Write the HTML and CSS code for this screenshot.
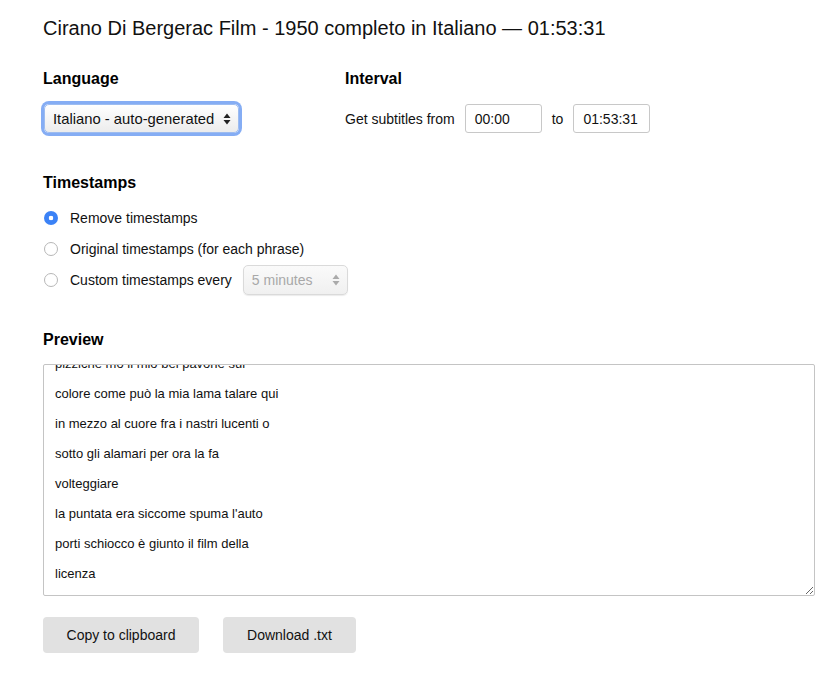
FILE: index.html
```html
<!DOCTYPE html>
<html>
<head>
<meta charset="utf-8">
<link rel="stylesheet" href="styles.css">
</head>
<body>
<div class="page">
  <h1 class="title">Cirano Di Bergerac Film - 1950 completo in Italiano — 01:53:31</h1>

  <div class="row">
    <section class="col col-lang">
      <h2 class="heading">Language</h2>
      <div class="select select-focus">
        <span>Italiano - auto-generated</span>
        <svg class="arrows" width="8" height="12" viewBox="0 0 8 12"><path d="M4 0.5 L7.5 5 H0.5 Z M4 11.5 L7.5 7 H0.5 Z" fill="#222"/></svg>
      </div>
    </section>
    <section class="col">
      <h2 class="heading">Interval</h2>
      <div class="interval">
        <span>Get subtitles from</span>
        <div class="field">00:00</div>
        <span>to</span>
        <div class="field">01:53:31</div>
      </div>
    </section>
  </div>

  <section class="block block-ts">
    <h2 class="heading">Timestamps</h2>
    <div class="radios">
      <label class="radio-row"><span class="radio checked"></span>Remove timestamps</label>
      <label class="radio-row"><span class="radio"></span>Original timestamps (for each phrase)</label>
      <label class="radio-row"><span class="radio"></span>Custom timestamps every
        <div class="select select-disabled">
          <span>5 minutes</span>
          <svg class="arrows" width="8" height="12" viewBox="0 0 8 12"><path d="M4 0.5 L7.5 5 H0.5 Z M4 11.5 L7.5 7 H0.5 Z" fill="#aaa"/></svg>
        </div>
      </label>
    </div>
  </section>

  <section class="block block-preview">
    <h2 class="heading">Preview</h2>
    <div class="preview">
      <div class="preview-inner">
        <p>pizziche mo il mio bel pavone sul</p>
        <p>colore come può la mia lama talare qui</p>
        <p>in mezzo al cuore fra i nastri lucenti o</p>
        <p>sotto gli alamari per ora la fa</p>
        <p>volteggiare</p>
        <p>la puntata era siccome spuma l'auto</p>
        <p>porti schiocco è giunto il film della</p>
        <p>licenza</p>
      </div>
    </div>
  </section>

  <div class="buttons">
    <button class="btn btn-copy">Copy to clipboard</button>
    <button class="btn btn-download">Download .txt</button>
  </div>
</div>
</body>
</html>
```

FILE: styles.css
```css
* { box-sizing: border-box; }
html, body { margin: 0; padding: 0; background: #fff; }
body {
  font-family: "Liberation Sans", Arial, Helvetica, sans-serif;
  color: #111;
  font-size: 14px;
}
.page {
  padding: 17px 13px 0 43px;
}
.title {
  font-size: 20px;
  font-weight: normal;
  line-height: 23px;
  margin: 0 0 30px 0;
  color: #111;
}
.heading {
  font-size: 16px;
  font-weight: bold;
  line-height: 18px;
  margin: 0;
  color: #000;
}
.row {
  display: flex;
}
.col-lang {
  width: 302px;
}
.col .heading { margin-bottom: 16px; }

.select {
  display: flex;
  align-items: center;
  justify-content: space-between;
  height: 29px;
  border: 1px solid #c9c9c9;
  border-radius: 5px;
  background: linear-gradient(#ffffff, #ececec);
  padding: 0 7px 0 8px;
  font-size: 14px;
  color: #111;
  box-shadow: 0 1px 1px rgba(0,0,0,0.08);
}
.select-focus {
  width: 195px;
  margin-left: 1px;
  font-size: 14.8px;
  box-shadow: 0 0 0 3px #85adf4;
  border-color: #9dbcf0;
}
.arrows { flex: none; }
.interval {
  display: flex;
  align-items: center;
  height: 29px;
  font-size: 14px;
  color: #111;
}
.interval span:first-child { margin-right: 10px; }
.field {
  width: 77px;
  height: 29px;
  border: 1px solid #c8c8c8;
  border-radius: 3px;
  padding: 0 9px;
  display: flex;
  align-items: center;
  background: #fff;
}
.interval span:nth-child(3) { margin: 0 10px; }

.block-ts { margin-top: 41px; }
.radios {
  display: flex;
  flex-direction: column;
  margin-top: 14px;
  gap: 8px;
}
.radio-row {
  display: flex;
  align-items: center;
  height: 23px;
  font-size: 14px;
  color: #111;
}
.radio {
  width: 14px;
  height: 14px;
  border-radius: 50%;
  border: 1px solid #b7b7b7;
  background: #fff;
  margin: 0 12px 0 1px;
  flex: none;
}
.radio.checked {
  border: none;
  background: radial-gradient(circle, #fff 0 2px, #3b82f6 2.6px);
}
.select-disabled {
  width: 105px;
  height: 30px;
  margin-left: 11px;
  color: #a8a8a8;
  border-color: #dadada;
  background: linear-gradient(#fafafa, #f0f0f0);
}

.block-preview { margin-top: 40px; }
.preview {
  margin-top: 15px;
  height: 232px;
  border: 1px solid #c4c4c4;
  border-radius: 2px;
  overflow: hidden;
  resize: both;
  padding: 0 11px;
}
.preview-inner { margin-top: -16px; }
.preview p {
  margin: 0;
  line-height: 30px;
  font-size: 13px;
  color: #111;
}

.buttons {
  display: flex;
  gap: 24px;
  margin-top: 21px;
}
.btn {
  font-family: inherit;
  font-size: 14px;
  color: #111;
  background: #e1e1e1;
  border: none;
  border-radius: 4px;
  height: 36px;
  padding: 0;
}
.btn-copy { width: 156px; }
.btn-download { width: 133px; }
```
